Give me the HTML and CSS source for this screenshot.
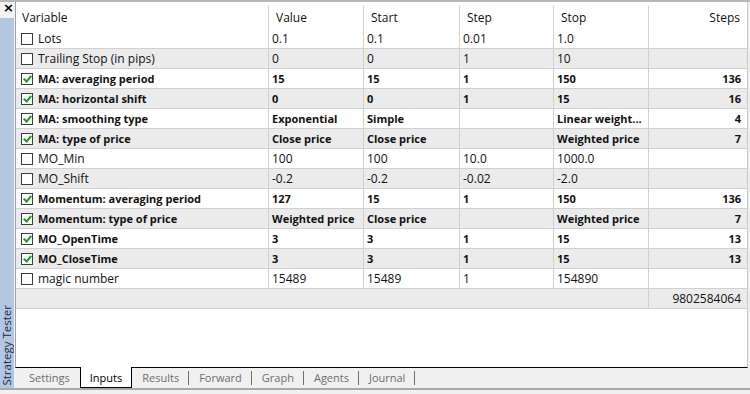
FILE: index.html
```html
<!DOCTYPE html>
<html>
<head>
<meta charset="utf-8">
<link rel="stylesheet" href="styles.css">
</head>
<body>
<div class="window">
  <aside class="sidebar">
    <div class="close">×</div>
    <div class="side-bar"><span class="side-title">Strategy Tester</span></div>
  </aside>
  <main class="main">
    <section class="panel">
      <div class="row head">
        <div class="c var">Variable</div>
        <div class="c">Value</div>
        <div class="c">Start</div>
        <div class="c">Step</div>
        <div class="c">Stop</div>
        <div class="c num">Steps</div>
      </div>
      <div class="row">
        <div class="c var"><span class="cb"></span>Lots</div>
        <div class="c">0.1</div><div class="c">0.1</div><div class="c">0.01</div><div class="c">1.0</div><div class="c num"></div>
      </div>
      <div class="row alt">
        <div class="c var"><span class="cb"></span>Trailing Stop (in pips)</div>
        <div class="c">0</div><div class="c">0</div><div class="c">1</div><div class="c">10</div><div class="c num"></div>
      </div>
      <div class="row bold">
        <div class="c var"><span class="cb on"></span>MA: averaging period</div>
        <div class="c">15</div><div class="c">15</div><div class="c">1</div><div class="c">150</div><div class="c num">136</div>
      </div>
      <div class="row alt bold">
        <div class="c var"><span class="cb on"></span>MA: horizontal shift</div>
        <div class="c">0</div><div class="c">0</div><div class="c">1</div><div class="c">15</div><div class="c num">16</div>
      </div>
      <div class="row bold">
        <div class="c var"><span class="cb on"></span>MA: smoothing type</div>
        <div class="c">Exponential</div><div class="c">Simple</div><div class="c"></div><div class="c">Linear weight...</div><div class="c num">4</div>
      </div>
      <div class="row alt bold">
        <div class="c var"><span class="cb on"></span>MA: type of price</div>
        <div class="c">Close price</div><div class="c">Close price</div><div class="c"></div><div class="c">Weighted price</div><div class="c num">7</div>
      </div>
      <div class="row">
        <div class="c var"><span class="cb"></span>MO_Min</div>
        <div class="c">100</div><div class="c">100</div><div class="c">10.0</div><div class="c">1000.0</div><div class="c num"></div>
      </div>
      <div class="row alt">
        <div class="c var"><span class="cb"></span>MO_Shift</div>
        <div class="c">-0.2</div><div class="c">-0.2</div><div class="c">-0.02</div><div class="c">-2.0</div><div class="c num"></div>
      </div>
      <div class="row bold">
        <div class="c var"><span class="cb on"></span>Momentum: averaging period</div>
        <div class="c">127</div><div class="c">15</div><div class="c">1</div><div class="c">150</div><div class="c num">136</div>
      </div>
      <div class="row alt bold">
        <div class="c var"><span class="cb on"></span>Momentum: type of price</div>
        <div class="c">Weighted price</div><div class="c">Close price</div><div class="c"></div><div class="c">Weighted price</div><div class="c num">7</div>
      </div>
      <div class="row bold">
        <div class="c var"><span class="cb on"></span>MO_OpenTime</div>
        <div class="c">3</div><div class="c">3</div><div class="c">1</div><div class="c">15</div><div class="c num">13</div>
      </div>
      <div class="row alt bold">
        <div class="c var"><span class="cb on"></span>MO_CloseTime</div>
        <div class="c">3</div><div class="c">3</div><div class="c">1</div><div class="c">15</div><div class="c num">13</div>
      </div>
      <div class="row">
        <div class="c var"><span class="cb"></span>magic number</div>
        <div class="c">15489</div><div class="c">15489</div><div class="c">1</div><div class="c">154890</div><div class="c num"></div>
      </div>
      <div class="row alt total">
        <div class="c span"></div>
        <div class="c num">9802584064</div>
      </div>
    </section>
    <nav class="tabs">
      <div class="tab first">Settings</div>
      <div class="tab active">Inputs</div>
      <div class="tab sep">Results</div>
      <div class="tab sep">Forward</div>
      <div class="tab sep">Graph</div>
      <div class="tab sep">Agents</div>
      <div class="tab sep">Journal</div>
    </nav>
  </main>
</div>
</body>
</html>
```
FILE: styles.css
```css
html, body {
  margin: 0;
  padding: 0;
}
body {
  width: 750px;
  height: 394px;
  overflow: hidden;
  background: #f0f0f0;
  font-family: "Open Sans", "Noto Sans", sans-serif;
  font-size: 11px;
  color: #111;
}
.window {
  display: flex;
  height: 390px;
  border-top: 2px solid #b8b8b8;
  border-bottom: 2px solid #a8a8a8;
  box-sizing: border-box;
}
.sidebar {
  width: 15px;
  display: flex;
  flex-direction: column;
  background: #f4f4f4;
}
.close {
  height: 16px;
  font-size: 13px;
  font-weight: bold;
  line-height: 12px;
  padding-left: 3px;
  color: #000;
  font-family: "DejaVu Sans", sans-serif;
}
.side-bar {
  flex: 1;
  margin-right: 1px;
  background: #b3c7e1;
  display: flex;
  flex-direction: column;
  justify-content: flex-end;
  align-items: center;
}
.side-title {
  writing-mode: vertical-rl;
  transform: rotate(180deg);
  color: #1b2a48;
  font-size: 11.5px;
  line-height: 14px;
  padding-top: 2px;
  white-space: nowrap;
}
.main {
  flex: 1;
  display: flex;
  flex-direction: column;
}
.panel {
  flex: 1;
  background: #fff;
  border-left: 1px solid #a0a0a0;
  border-right: 1px solid #c8c8c8;
  margin-right: 2px;
  border-bottom: 1px solid #000;
}
.row {
  display: grid;
  grid-template-columns: 253px 95px 96px 94px 95px 1fr;
  height: 20px;
  border-bottom: 1px solid #d0d0d0;
  box-sizing: border-box;
  line-height: 20px;
  font-size: 12px;
}
.row.alt {
  background: #ebebeb;
}
.row.bold {
  font-weight: bold;
  font-size: 11px;
  line-height: 19px;
}
.c {
  border-right: 1px solid #d0d0d0;
  padding-left: 3px;
  white-space: nowrap;
  overflow: hidden;
}
.c:last-child {
  border-right: none;
}
.c.num {
  text-align: right;
  padding-left: 0;
  padding-right: 6px;
}
.c.var {
  padding-left: 5px;
  display: flex;
  align-items: center;
}
.row.head {
  height: 27px;
  border-bottom: none;
  padding-top: 4px;
  line-height: 23px;
}
.row.head .c {
  padding-left: 7px;
}
.row.head .c.var {
  padding-left: 6px;
}
.row.head .c.num {
  padding-right: 7px;
}
.row.total {
  grid-template-columns: 633px 1fr;
}
.cb {
  width: 10px;
  height: 10px;
  border: 1px solid #3c3c3c;
  background: #fff;
  margin-right: 5px;
  flex: none;
  position: relative;
}
.cb.on::after {
  content: "";
  position: absolute;
  width: 3px;
  height: 6px;
  border: solid #1e9a1e;
  border-width: 0 2px 2px 0;
  transform: rotate(40deg);
  left: 3px;
  top: 0px;
}
.tabs {
  height: 20px;
  display: flex;
  align-items: stretch;
  padding-left: 4px;
  color: #6d6d6d;
  line-height: 19px;
  margin-right: 2px;
}
.tab {
  padding: 0 10px;
  position: relative;
}
.tab.active {
  background: #fff;
  color: #000;
  border: 1px solid #000;
  border-top: none;
  margin-top: -1px;
  padding-top: 1px;
  height: 19px;
  padding-left: 9px;
  padding-right: 9px;
}
.tab.sep::after {
  content: "";
  position: absolute;
  right: 0;
  top: 3px;
  height: 14px;
  border-right: 1px solid #6d6d6d;
}
```
